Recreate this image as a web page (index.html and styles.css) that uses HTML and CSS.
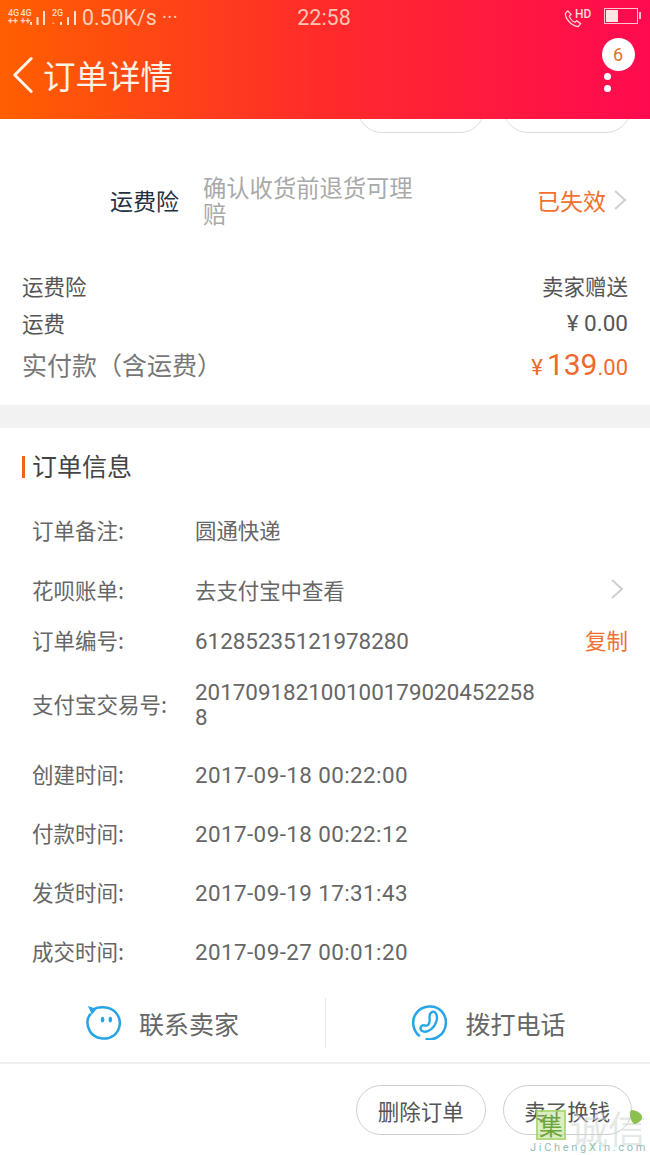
FILE: index.html
```html
<!DOCTYPE html>
<html lang="zh-CN">
<head>
<meta charset="utf-8">
<title>订单详情</title>
<link rel="stylesheet" href="styles.css">
</head>
<body>
<div class="phone">
  <header class="topbar">
    <div class="status">
      <div class="status-left">
        <span class="net"><span class="net-text">4G</span><span class="net-plus">++</span></span>
        <span class="net"><span class="net-text">4G</span><span class="net-plus">++</span></span>
        <svg class="signal signal-a" viewBox="0 0 16 15"><rect x="0" y="12" width="2" height="3"/><rect x="6.5" y="7" width="2" height="8"/><rect x="13" y="1" width="2" height="14"/></svg>
        <span class="net net-gap"><span class="net-text">2G</span><span class="net-plus">.</span></span>
        <svg class="signal" viewBox="0 0 16 15"><rect x="0" y="12" width="2" height="3"/><rect x="7" y="7" width="2" height="8"/><rect x="14" y="1" width="2" height="14"/></svg>
        <span class="speed">0.50K/s</span>
        <span class="more">•••</span>
      </div>
      <div class="clock">22:58</div>
      <div class="status-right">
        <svg class="call" viewBox="0 0 20 20"><path d="M4 2 L1.5 4.5 C1 10 8 18 15 18.5 L17.5 15.5 L13.5 12.5 L11.5 14 C9 13 6.5 10 5.5 7.5 L7.5 5.8 Z" fill="none" stroke="#ffd9d9" stroke-width="1.3"/></svg>
        <span class="hd">HD</span>
        <span class="battery"><span class="battery-fill"></span></span>
      </div>
    </div>
    <div class="nav">
      <svg class="back" viewBox="0 0 24 40"><path d="M21 2 L3 20 L21 38" fill="none" stroke="#fff6ee" stroke-width="3.2" stroke-linecap="round" stroke-linejoin="round"/></svg>
      <h1 class="title">订单详情</h1>
      <div class="menu">
        <span class="badge">6</span>
        <span class="dot"></span>
        <span class="dot"></span>
      </div>
    </div>
  </header>

  <main class="content">
    <div class="peek">
      <span class="pill"></span>
      <span class="pill"></span>
    </div>

    <section class="insurance">
      <span class="ins-label">运费险</span>
      <span class="ins-desc">确认收货前退货可理赔</span>
      <span class="ins-status">已失效</span>
      <svg class="chev" viewBox="0 0 14 22"><path d="M2 2 L12 11 L2 20" fill="none" stroke="#cfcfcf" stroke-width="2"/></svg>
    </section>

    <section class="fees">
      <div class="fee-row"><span>运费险</span><span>卖家赠送</span></div>
      <div class="fee-row"><span>运费</span><span class="num">¥ 0.00</span></div>
      <div class="fee-row fee-total">
        <span class="total-label">实付款（含运费）</span>
        <span class="total-value"><span class="yen">¥</span>139<span class="cents">.00</span></span>
      </div>
    </section>

    <div class="band"></div>

    <section class="info">
      <h2 class="info-title">订单信息</h2>
      <div class="row row-a"><span class="key">订单备注:</span><span class="val cjk">圆通快递</span></div>
      <div class="row row-b"><span class="key">花呗账单:</span><span class="val cjk">去支付宝中查看</span>
        <svg class="chev row-chev" viewBox="0 0 14 22"><path d="M2 2 L12 11 L2 20" fill="none" stroke="#cfcfcf" stroke-width="2"/></svg>
      </div>
      <div class="row row-c"><span class="key">订单编号:</span><span class="val">61285235121978280</span><span class="copy">复制</span></div>
      <div class="row row-d"><span class="key">支付宝交易号:</span><span class="val val-wrap">20170918210010017902045225<wbr>88</span></div>
      <div class="row row-e"><span class="key">创建时间:</span><span class="val val-time">2017-09-18 00:22:00</span></div>
      <div class="row row-e"><span class="key">付款时间:</span><span class="val val-time">2017-09-18 00:22:12</span></div>
      <div class="row row-e"><span class="key">发货时间:</span><span class="val val-time">2017-09-19 17:31:43</span></div>
      <div class="row row-e"><span class="key">成交时间:</span><span class="val val-time">2017-09-27 00:01:20</span></div>
    </section>
  </main>

  <section class="contact">
    <div class="contact-item">
      <svg class="contact-icon" viewBox="0 0 36 36"><path d="M7 5 C12 1 24 1 30 7 C37 14 36 25 29 31 C21 37 9 35 4 27 C0 20 1 13 5 9" fill="none" stroke="#27a5e6" stroke-width="2.6"/><path d="M2 1 L11 4 L6 10 Z" fill="#27a5e6"/><ellipse cx="17" cy="15" rx="1.8" ry="3" fill="#27a5e6"/><ellipse cx="25" cy="15" rx="1.8" ry="3" fill="#27a5e6"/></svg>
      <span>联系卖家</span>
    </div>
    <div class="contact-item contact-split">
      <svg class="contact-icon" viewBox="0 0 36 36"><path d="M8 32 C1 27 -1 16 4 9 C10 0 24 -1 31 7 C37 14 36 26 28 32 C24 35 18 36 14 35" fill="none" stroke="#27a5e6" stroke-width="2.6"/><path d="M21 7 C24 6 27 11 25 17 C23 24 16 29 11 27 C8 26 8 22 11 21 C14 20 15 23 17 20 C19 17 18 15 18 12 C18 9 19 8 21 7 Z" fill="none" stroke="#27a5e6" stroke-width="2.4" stroke-linejoin="round"/></svg>
      <span>拨打电话</span>
    </div>
  </section>

  <footer class="actions">
    <button class="pill-btn">删除订单</button>
    <button class="pill-btn">卖了换钱</button>
  </footer>

  <div class="watermark">
    <span class="wm-box">集</span>
    <span class="wm-word">诚信</span>
    <span class="wm-latin">JiChengXin.com</span>
    <svg class="wm-leaf" viewBox="0 0 16 16"><path d="M3 1 C9 1 15 5 14 9 C13 13 8 15 6 15 C2 11 1 5 3 1 Z" fill="#8cc152"/></svg>
  </div>
</div>
</body>
</html>
```

FILE: styles.css
```css
* { box-sizing: border-box; }
html, body { margin: 0; padding: 0; }
body {
  width: 650px;
  height: 1155px;
  overflow: hidden;
  background: #fff;
  font-family: Roboto, "Noto Sans CJK SC", sans-serif;
  color: #666;
}
.phone { position: relative; width: 650px; height: 1155px; overflow: hidden; }

.topbar {
  height: 119px;
  background: linear-gradient(90deg, #ff5f00 0%, #ff2b2b 50%, #ff0a50 100%);
  color: #fff;
  position: relative;
  z-index: 2;
}
.status {
  height: 36px;
  display: grid;
  grid-template-columns: 1fr auto 1fr;
  align-items: center;
  padding: 0 10px 2px 8px;
}
.status-left { display: flex; align-items: center; color: #ffd9c4; }
.net { display: inline-flex; flex-direction: column; width: 12.5px; flex: none; font-size: 9px; font-weight: 500; white-space: nowrap; }
.net-gap { margin-left: 6px; width: 8px; }
.net-text { display: block; height: 9px; line-height: 9px; }
.net-plus { display: block; height: 7px; line-height: 7px; font-weight: 700; }
.signal { width: 16px; height: 15px; fill: #ffe2d2; flex: none; }
.signal-a { margin-left: -3px; }
.speed { font-size: 21.3px; margin-left: 6px; color: #ffd0b8; }
.more { font-size: 10px; margin-left: 6px; letter-spacing: 2px; color: #ffd0b8; }
.clock { font-size: 21.5px; color: #ffc4b4; }
.status-right { display: flex; align-items: center; justify-content: flex-end; }
.call { width: 19px; height: 19px; margin: 2px -8px 0 0; }
.hd { font-size: 12px; font-weight: 500; color: #ffd9d9; margin-top: -7px; width: 15px; }
.battery {
  width: 34px; height: 16px; margin: -2px 2px 0 14px;
  border: 1px solid #ffc8d0; display: block; padding: 1px;
  position: relative;
}
.battery::after {
  content: ""; position: absolute; right: -4px; top: 3px; width: 2px; height: 7px; background: #ffc8d0;
}
.battery-fill { display: block; width: 12px; height: 100%; background: #ffe4e8; }

.nav { height: 83px; display: flex; align-items: center; padding: 0 0 0 12px; position: relative; }
.back { width: 22px; height: 38px; margin-top: -6px; }
.title { font-size: 32.5px; font-weight: 400; margin: -6px 0 0 9px; color: #fff3e8; font-family: "Noto Sans CJK SC", sans-serif; line-height: 42px; }
.menu {
  position: absolute; right: 14px; top: 2px; width: 36px;
  display: flex; flex-direction: column; align-items: center;
}
.badge {
  width: 33px; height: 33px; border-radius: 50%; background: #fff;
  color: #e0702c; font-size: 18px; display: flex; align-items: center; justify-content: center;
}
.dot { width: 7px; height: 7px; border-radius: 50%; background: #fff; margin: 5px 22px 0 0; }
.badge + .dot { margin-top: 2px; }

.content { height: 944px; overflow: hidden; }
.peek { height: 14px; display: flex; justify-content: flex-end; gap: 18px; padding-right: 19px; overflow: hidden; position: relative; }
.pill {
  display: block; width: 128px; height: 50px; margin-top: -36px;
  border: 1px solid #dcdcdc; border-radius: 25px;
}

.insurance {
  display: flex; align-items: center; height: 134px; padding-left: 110px; padding-right: 23px;
  font-family: "Noto Sans CJK SC", sans-serif;
}
.ins-label { width: 93px; font-size: 23px; color: #23303f; flex: none; }
.ins-desc { width: 215px; font-size: 23.3px; line-height: 26px; color: #a9a9a9; flex: none; word-break: break-all; }
.ins-status { margin-left: auto; font-size: 23px; color: #f07030; }
.chev { width: 14px; height: 22px; margin-left: 7px; flex: none; }

.fees { padding: 0 22px; height: 138px; font-family: "Noto Sans CJK SC", sans-serif; }
.fee-row { display: flex; justify-content: space-between; align-items: center; font-size: 21.5px; color: #555; height: 37px; }
.fee-total { height: 44px; margin-top: 1px; }
.num { font-family: Roboto, sans-serif; font-size: 22.5px; }
.total-label { font-size: 25px; color: #777; }
.total-value { font-family: Roboto, sans-serif; font-size: 30px; color: #ee6a2c; }
.yen { font-size: 22px; margin-right: 4px; }
.cents { font-size: 22px; }

.band { height: 23px; background: #f2f2f2; }

.info { padding: 0 22px 0 33px; position: relative; }
.info-title {
  font-size: 25px; font-weight: 400; color: #444; margin: 0 0 0 -1px; height: 76px; line-height: 78px;
  font-family: "Noto Sans CJK SC", sans-serif; position: relative; top: -2px;
}
.info-title::before {
  content: ""; position: absolute; left: -10px; top: 30px; width: 3px; height: 22px; background: #f0651e;
}
.row { display: flex; align-items: center; color: #666; position: relative; }
.key { width: 162px; flex: none; font-family: "Noto Sans CJK SC", sans-serif; color: #666; font-size: 21.5px; margin: -4px 1px 0 -1px; }
.val { font-size: 22.4px; line-height: 25px; color: #666; }
.val.cjk { font-family: "Noto Sans CJK SC", sans-serif; font-size: 21.4px; margin-top: -4px; }
.val-wrap { width: 346px; word-break: break-all; }
.val-time { letter-spacing: 0.42px; }
.row-a { height: 54px; }
.row-b { height: 64px; padding-top: 2px; }
.row-c { height: 38px; }
.row-d { height: 86px; padding-top: 4px; }
.row-e { height: 59px; }
.row-chev { position: absolute; right: 4px; top: 20px; }
.copy { margin-left: auto; margin-top: -4px; font-family: "Noto Sans CJK SC", sans-serif; font-size: 21.5px; color: #f07030; }

.contact {
  position: absolute; left: 0; right: 0; top: 983px; height: 81px;
  display: grid; grid-template-columns: 325px 325px;
  background: #fff; border-bottom: 2px solid #eeeeee; align-items: center;
  font-size: 25px; color: #666; font-family: "Noto Sans CJK SC", sans-serif;
}
.contact-item { display: flex; align-items: center; justify-content: center; gap: 18px; height: 50px; }
.contact-split { border-left: 1px solid #e8e8e8; padding-left: 2px; }
.contact-icon { width: 35px; height: 35px; flex: none; }

.actions {
  position: absolute; left: 0; right: 0; top: 1064px; height: 91px;
  display: flex; justify-content: flex-end; gap: 17px; padding: 21px 18px 0 0; background: #fff;
}
.pill-btn {
  width: 129.5px; height: 50px; border: 1px solid #cfcfcf; border-radius: 25px; background: #fff;
  font-family: "Noto Sans CJK SC", sans-serif; font-size: 21.5px; color: #555; padding: 0;
}

.watermark { position: absolute; left: 530px; top: 1108px; width: 120px; height: 47px; pointer-events: none; }
.wm-box {
  position: absolute; left: 6px; top: 2px; width: 30px; height: 30px;
  background: rgba(174, 217, 120, 0.45); border: 2px solid rgba(160, 210, 100, 0.7);
  color: #6da53a; font-size: 24px; line-height: 25px; text-align: center;
  font-family: "Noto Sans CJK SC", sans-serif;
}
.wm-word {
  position: absolute; left: 40px; top: 0; font-size: 38px; line-height: 38px;
  color: rgba(205, 215, 208, 0.55); font-family: "Noto Sans CJK SC", sans-serif;
}
.wm-latin { position: absolute; left: 0; bottom: 1px; font-size: 11px; line-height: 13px; letter-spacing: 2.7px; color: #8fc0b8; font-family: Roboto, sans-serif; }
.wm-leaf { position: absolute; left: 98px; top: 0; width: 16px; height: 18px; }
```
